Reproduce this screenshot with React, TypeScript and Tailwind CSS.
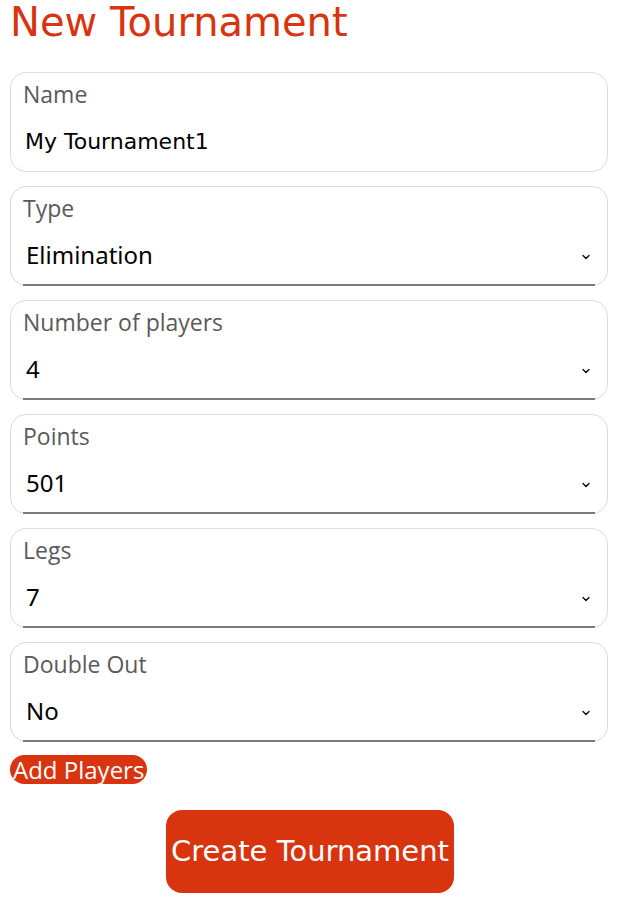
import { ChevronDown } from "lucide-react";

const FIELDS = [
  { label: "Type", value: "Elimination" },
  { label: "Number of players", value: "4" },
  { label: "Points", value: "501" },
  { label: "Legs", value: "7" },
  { label: "Double Out", value: "No" },
];

function SelectCard({ label, value }: { label: string; value: string }) {
  return (
    <div className="relative h-[100px] rounded-2xl border border-[#dcdcdc] bg-white">
      <div className="pl-[12px] pt-[6px] text-[23px] leading-[30px] text-[#5a5a5a] font-['Open_Sans',sans-serif]">
        {label}
      </div>
      <div className="flex items-center justify-between pl-[15px] pr-[15px] pt-[17px]">
        <span className="text-[24px] leading-[30px] text-black font-['Noto_Sans',sans-serif]">{value}</span>
        <ChevronDown size={12} strokeWidth={2.5} className="text-black mt-1" />
      </div>
      <div className="absolute left-[12px] right-[12px] bottom-[-1px] h-[2px] bg-[#7a7a7a]" />
    </div>
  );
}

export default function App() {
  return (
    <div className="w-[628px] min-h-[906px] bg-white px-[10px] pt-0">
      <h1 className="text-[#d7340f] text-[40px] leading-[42px] pt-[1px] font-['Verdana','DejaVu_Sans',sans-serif]">
        New Tournament
      </h1>
      <div className="mt-[29px] mr-[10px] flex flex-col gap-[14px]">
        <div className="h-[100px] rounded-2xl border border-[#dcdcdc] bg-white">
          <div className="pl-[12px] pt-[6px] text-[23px] leading-[30px] text-[#5a5a5a] font-['Open_Sans',sans-serif]">
            Name
          </div>
          <div className="pl-[14px] pt-[19px] text-[22px] leading-[28px] text-black font-['DejaVu_Sans',sans-serif]">
            My Tournament1
          </div>
        </div>
        {FIELDS.map((f) => (
          <SelectCard key={f.label} label={f.label} value={f.value} />
        ))}
      </div>
      <button className="mt-[13px] rounded-full bg-[#d7340f] px-[3px] h-[29px] text-white text-[24px] leading-[29px] font-['Open_Sans',sans-serif]">
        Add Players
      </button>
      <div className="mt-[25px] flex justify-center">
        <button className="mr-[8px] h-[83px] w-[288px] rounded-2xl bg-[#d7340f] text-white text-[29px] font-['DejaVu_Sans',sans-serif]">
          Create Tournament
        </button>
      </div>
    </div>
  );
}
